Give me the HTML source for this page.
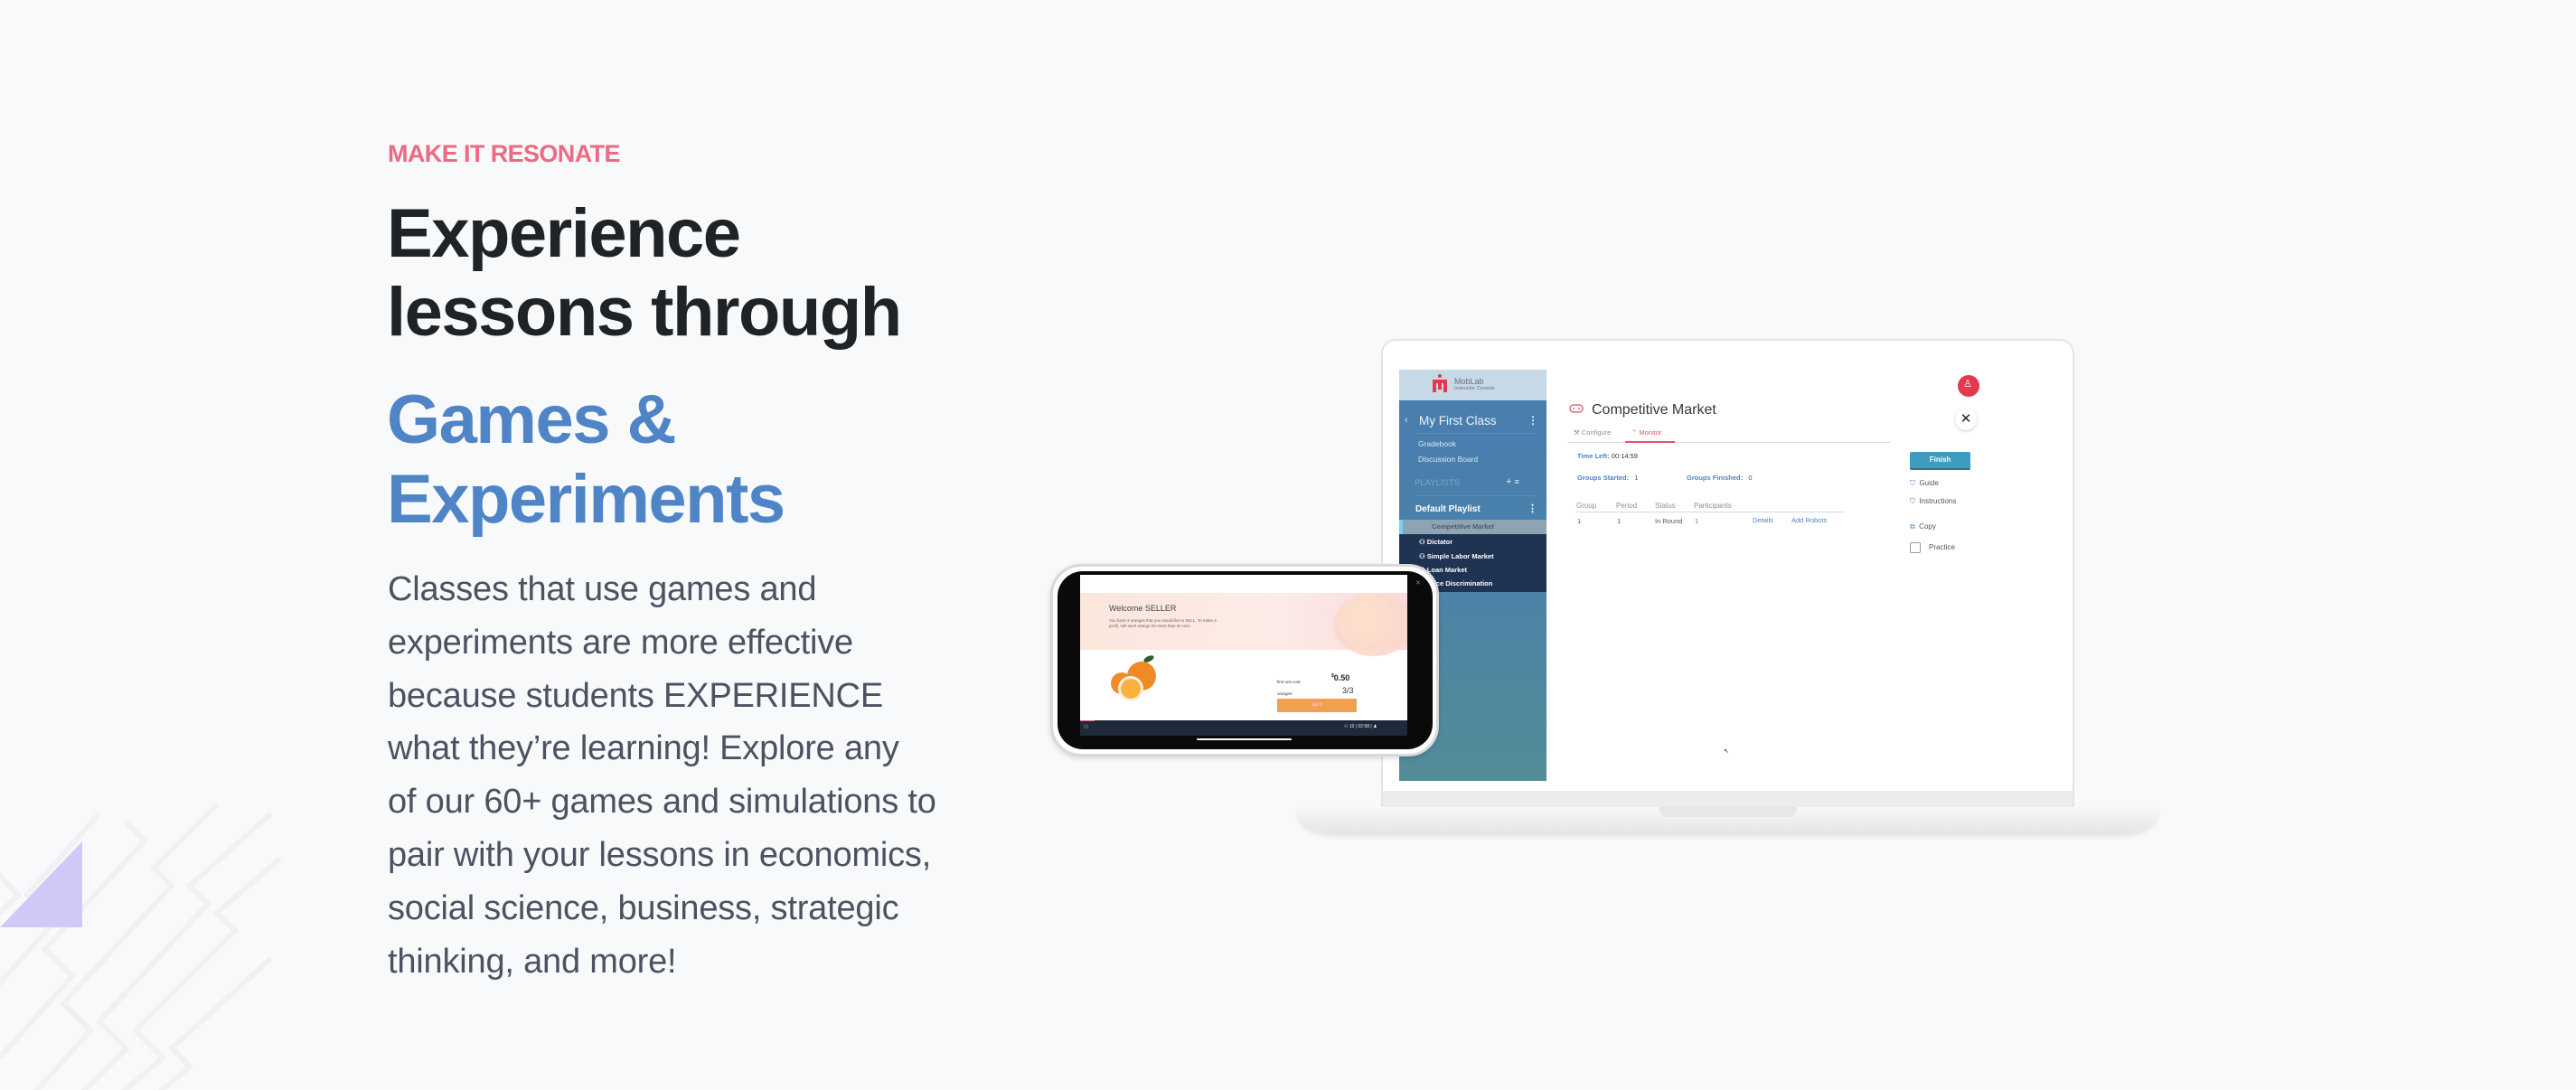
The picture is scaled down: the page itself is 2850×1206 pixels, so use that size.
<!DOCTYPE html>
<html><head><meta charset="utf-8"><style>
*{margin:0;padding:0;box-sizing:border-box}
body{width:2850px;height:1206px;background:#f8f9fa;position:relative;overflow:hidden;font-family:"Liberation Sans",sans-serif}
.a{position:absolute;white-space:nowrap}
.t{position:absolute;white-space:nowrap;line-height:1}
</style></head><body>

<svg class="a" style="left:0;top:880px" width="320" height="326" viewBox="0 0 320 326">
<g fill="none" stroke="#f0f1f3" stroke-width="6">
<path d="M-40 170 L20 110 L-10 80"/>
<path d="M-20 230 L60 140 L30 110 L110 20"/>
<path d="M0 290 L80 200 L50 170 L160 50 L140 30"/>
<path d="M20 350 L100 260 L70 230 L190 100 L170 80 L240 10"/>
<path d="M60 360 L140 280 L110 250 L230 120 L210 100 L300 20"/>
<path d="M100 360 L180 290 L150 260 L260 150 L240 130 L310 70"/>
<path d="M140 360 L210 300 L190 280 L300 180"/>
</g></svg>
<svg class="a" style="left:0;top:931px" width="92" height="95"><polygon points="91,0 91,95 0,95" fill="#cfc9f8"/></svg>

<div class="t" style="left:429px;top:157px;font-size:27px;font-weight:bold;color:#ec6a83;letter-spacing:-0.6px">MAKE IT RESONATE</div>
<div class="t" style="left:428px;top:215px;font-size:76px;font-weight:bold;color:#1f2326;letter-spacing:-1.5px;line-height:87px">Experience<br>lessons through</div>
<div class="t" style="left:428px;top:421px;font-size:76px;font-weight:bold;color:#4f84c6;letter-spacing:-1.5px;line-height:88px">Games &amp;<br>Experiments</div>
<div class="a" style="left:429px;top:623px;font-size:38px;color:#4b5261;line-height:58.8px;letter-spacing:-0.2px">Classes that use games and<br>experiments are more effective<br>because students EXPERIENCE<br>what they’re learning! Explore any<br>of our 60+ games and simulations to<br>pair with your lessons in economics,<br>social science, business, strategic<br>thinking, and more!</div>

<!-- laptop -->
<div class="a" style="left:1436px;top:890px;width:951px;height:32px;background:linear-gradient(#fafafa,#e4e5e7);border-radius:0 0 40px 40px/0 0 24px 24px;box-shadow:0 4px 6px rgba(0,0,0,.08)"></div>
<div class="a" style="left:1836px;top:891px;width:152px;height:13px;background:#e6e7e9;border-radius:0 0 10px 10px"></div>
<div class="a" style="left:1528px;top:375px;width:767px;height:518px;background:#fff;border:2px solid #e3e4e6;border-radius:16px 16px 0 0"></div>
<div class="a" style="left:1530px;top:875px;width:763px;height:18px;background:#ececee"></div>
<div class="a" style="left:1548px;top:409px;width:728px;height:455px;background:#fff"></div>

<div class="a" style="left:1548px;top:409px;width:163px;height:455px;background:linear-gradient(#4a7db0 0%,#4a80ab 40%,#548c97 100%)"></div>
<div class="a" style="left:1548px;top:409px;width:163px;height:34px;background:#c7d8e6"></div>
<svg class="a" style="left:1583px;top:413px" width="20" height="22"><g fill="#e23a4e"><rect x="2" y="7" width="16" height="4"/><rect x="2" y="7" width="4" height="14"/><rect x="14" y="7" width="4" height="14"/><rect x="8" y="11" width="4" height="7"/><circle cx="10" cy="3" r="2"/></g></svg>
<div class="t" style="left:1609px;top:418px;font-size:9px;color:#6a7078">MobLab</div>
<div class="t" style="left:1609px;top:428px;font-size:5.5px;color:#6a7078">Instructor Console</div>
<div class="t" style="left:1554px;top:460px;font-size:11px;color:#dde8f2">‹</div>
<div class="t" style="left:1570px;top:459px;font-size:13.5px;color:#eef4fa">My First Class</div>
<div class="t" style="left:1690px;top:459px;font-size:12px;color:#dde8f2;font-weight:bold">⋮</div>
<div class="a" style="left:1566px;top:479px;width:136px;height:1px;background:#5a8bb8"></div>
<div class="t" style="left:1569px;top:487px;font-size:8.5px;color:#dbe6f0">Gradebook</div>
<div class="t" style="left:1569px;top:504px;font-size:8.5px;color:#dbe6f0">Discussion Board</div>
<div class="t" style="left:1565px;top:530px;font-size:9.5px;color:#7ea3c6">PLAYLISTS</div>
<div class="t" style="left:1666px;top:528px;font-size:11px;color:#e0eaf3">+ <span style="font-size:9px">≡</span></div>
<div class="a" style="left:1566px;top:548px;width:136px;height:1px;background:#5a8bb8"></div>
<div class="t" style="left:1566px;top:559px;font-size:10px;font-weight:bold;color:#fff">Default Playlist</div>
<div class="t" style="left:1690px;top:558px;font-size:11px;color:#fff;font-weight:bold">⋮</div>
<div class="a" style="left:1548px;top:575px;width:163px;height:16px;background:#8ea4b3;border-left:4px solid #6fd4f0"></div>
<div class="t" style="left:1584px;top:579px;font-size:7.5px;font-weight:bold;color:#4e5d6c">Competitive Market</div>
<div class="a" style="left:1548px;top:591px;width:163px;height:64px;background:#1f3352"></div>
<div class="t" style="left:1570px;top:596px;font-size:7.5px;font-weight:bold;color:#fff">⚇ Dictator</div>
<div class="t" style="left:1570px;top:612px;font-size:7.5px;font-weight:bold;color:#fff">⚇ Simple Labor Market</div>
<div class="t" style="left:1570px;top:627px;font-size:7.5px;font-weight:bold;color:#fff">⚇ Loan Market</div>
<div class="t" style="left:1570px;top:642px;font-size:7.5px;font-weight:bold;color:#fff">⚇ Price Discrimination</div>

<svg class="a" style="left:1736px;top:446px" width="16" height="12"><rect x="1" y="2" width="14" height="8" rx="4" fill="none" stroke="#e06b7d" stroke-width="1.5"/><circle cx="5" cy="6" r="1" fill="#e06b7d"/><circle cx="11" cy="6" r="1" fill="#e06b7d"/></svg>
<div class="t" style="left:1761px;top:446px;font-size:16px;color:#333a40">Competitive Market</div>
<div class="t" style="left:1741px;top:475px;font-size:7.5px;color:#8a9096">⚒ Configure</div>
<div class="t" style="left:1805px;top:475px;font-size:7.5px;color:#e0556b">⌃ Monitor</div>
<div class="a" style="left:1734px;top:489px;width:357px;height:1px;background:#d8dadc"></div>
<div class="a" style="left:1798px;top:488px;width:55px;height:2px;background:#e0556b"></div>
<div class="t" style="left:1745px;top:501px;font-size:7.5px;color:#333"><b style="color:#4f84c6">Time Left:</b> 00:14:59</div>
<div class="t" style="left:1745px;top:525px;font-size:7.5px;color:#555"><b style="color:#4f84c6">Groups Started:</b> &nbsp;&nbsp;1</div>
<div class="t" style="left:1866px;top:525px;font-size:7.5px;color:#555"><b style="color:#4f84c6">Groups Finished:</b> &nbsp;&nbsp;0</div>
<div class="t" style="left:1744px;top:556px;font-size:8px;color:#8a8f95">Group</div>
<div class="t" style="left:1788px;top:556px;font-size:8px;color:#8a8f95">Period</div>
<div class="t" style="left:1831px;top:556px;font-size:8px;color:#8a8f95">Status</div>
<div class="t" style="left:1874px;top:556px;font-size:8px;color:#8a8f95">Participants</div>
<div class="a" style="left:1743px;top:566px;width:298px;height:1px;background:#d8dadc"></div>
<div class="t" style="left:1745px;top:573px;font-size:7.5px;color:#555">1</div>
<div class="t" style="left:1789px;top:573px;font-size:7.5px;color:#555">1</div>
<div class="t" style="left:1831px;top:573px;font-size:7.5px;color:#555">In Round</div>
<div class="t" style="left:1875px;top:573px;font-size:7.5px;color:#4f84c6">1</div>
<div class="t" style="left:1939px;top:572px;font-size:7.5px;color:#4f84c6">Details</div>
<div class="t" style="left:1982px;top:572px;font-size:7.5px;color:#4f84c6">Add Robots</div>

<div class="a" style="left:2166px;top:415px;width:24px;height:24px;border-radius:50%;background:#e23a4e"></div>
<div class="t" style="left:2172px;top:420px;font-size:11px;color:#fff">♙</div>
<div class="a" style="left:2163px;top:452px;width:24px;height:24px;border-radius:50%;background:#fff;box-shadow:0 1px 3px rgba(0,0,0,.2);text-align:center;font-size:15px;line-height:24px;color:#222">✕</div>
<div class="a" style="left:2113px;top:500px;width:67px;height:20px;background:#3e9cbf;border-radius:2px;border-bottom:2px solid #2a7290;color:#fff;font-size:8px;font-weight:bold;text-align:center;line-height:18px">Finish</div>
<div class="t" style="left:2113px;top:531px;font-size:8px;color:#555"><span style="color:#4f84c6">⛉</span>&nbsp; Guide</div>
<div class="t" style="left:2113px;top:551px;font-size:8px;color:#555"><span style="color:#4f84c6">⛉</span>&nbsp; Instructions</div>
<div class="t" style="left:2113px;top:579px;font-size:8px;color:#555"><span style="color:#4f84c6">⧉</span>&nbsp; Copy</div>
<div class="a" style="left:2113px;top:600px;width:12px;height:12px;border:1px solid #999;border-radius:2px;background:#fff"></div>
<div class="t" style="left:2134px;top:602px;font-size:8px;color:#555">Practice</div>
<div class="t" style="left:1907px;top:828px;font-size:7px;color:#222">↖</div>

<!-- phone -->
<div class="a" style="left:1162px;top:624px;width:430px;height:213px;border-radius:34px;background:#fff;border:3px solid #d8d9db;box-shadow:0 2px 6px rgba(0,0,0,.15)"></div>
<div class="a" style="left:1170px;top:632px;width:415px;height:197px;border-radius:28px;background:#0a0a0a"></div>
<div class="a" style="left:1195px;top:636px;width:362px;height:178px;background:#fff;overflow:hidden">
  <div class="a" style="left:0;top:20px;width:362px;height:63px;background:linear-gradient(90deg,#fbe6dc,#fcebe6 60%,#fadadd)"></div>
  <div class="a" style="left:280px;top:20px;width:90px;height:70px;border-radius:50%;background:radial-gradient(circle at 40% 40%,#fde2c8,#f9d1cf);opacity:.9"></div>
  <div class="t" style="left:32px;top:33px;font-size:9px;color:#444">Welcome SELLER</div>
  <div class="a" style="left:32px;top:48px;font-size:4.5px;color:#666;line-height:6px">You have 3 oranges that you would like to SELL. To make a<br>profit, sell each orange for more than its cost.</div>
  <div class="a" style="left:34px;top:108px;width:24px;height:24px;border-radius:50%;background:#f28c28"></div>
  <div class="a" style="left:52px;top:96px;width:32px;height:32px;border-radius:50%;background:#f08a24"></div>
  <div class="a" style="left:42px;top:112px;width:28px;height:28px;border-radius:50%;background:#fbb040;border:3px solid #f5f0e0"></div>
  <div class="a" style="left:70px;top:90px;width:12px;height:6px;border-radius:50%;background:#2f5e2a;transform:rotate(-25deg)"></div>
  <div class="t" style="left:218px;top:117px;font-size:4.5px;color:#333">first unit cost:</div>
  <div class="t" style="left:218px;top:130px;font-size:4.5px;color:#333">oranges:</div>
  <div class="t" style="left:278px;top:110px;font-size:9px;font-weight:bold;color:#222"><sup style="font-size:5px">$</sup>0.50</div>
  <div class="t" style="left:290px;top:124px;font-size:9px;color:#333">3/3</div>
  <div class="a" style="left:218px;top:137px;width:88px;height:15px;background:#f0a050;border-radius:1px;color:#fde;font-size:5px;text-align:center;line-height:15px">Got it</div>
  <div class="a" style="left:0;top:161px;width:362px;height:17px;background:#1d2a3a"></div>
  <div class="a" style="left:0;top:161px;width:16px;height:1px;background:#e0556b"></div>
  <div class="t" style="left:4px;top:166px;font-size:6px;color:#ddd">⚇</div>
  <div class="t" style="left:292px;top:166px;font-size:5px;color:#eee">⚇ 10 | 02:58 | ♟</div>
</div>
<div class="a" style="left:1566px;top:641px;font-size:7px;color:#888">✕</div>
<div class="a" style="left:1324px;top:817px;width:105px;height:2px;background:#fff;border-radius:1px"></div>

</body></html>
